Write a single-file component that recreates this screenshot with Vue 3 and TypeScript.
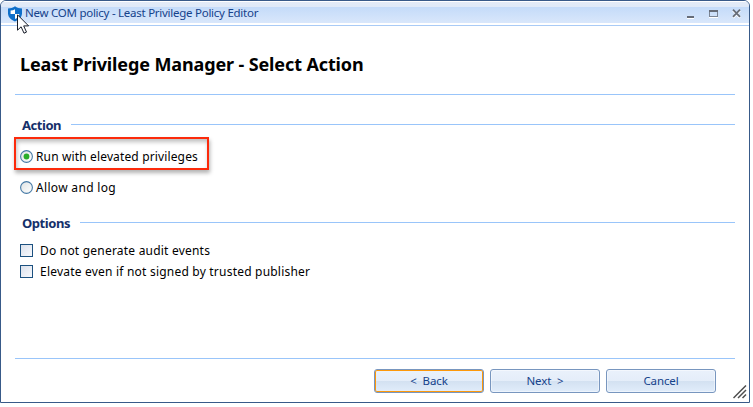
<script setup lang="ts">
import { ref } from 'vue'

interface Choice {
  id: string
  label: string
}

const actions: Choice[] = [
  { id: 'elevate', label: 'Run with elevated privileges' },
  { id: 'allow', label: 'Allow and log' },
]
const options: Choice[] = [
  { id: 'audit', label: 'Do not generate audit events' },
  { id: 'unsigned', label: 'Elevate even if not signed by trusted publisher' },
]
const buttons: Choice[] = [
  { id: 'back', label: '<\u00a0 Back' },
  { id: 'next', label: 'Next \u00a0>' },
  { id: 'cancel', label: 'Cancel' },
]

const selected = ref('elevate')
const focused = ref('back')
</script>

<template>
  <div class="window">
    <header class="titlebar">
      <svg class="shield" width="16" height="16" viewBox="0 0 16 16">
        <path d="M8 0.3C6 1.9 3.6 2.4 1 2.5V7.5C1.2 11.3 4 14 8 15.4C12 14 14.8 11.3 15 7.5V2.5C12.4 2.4 10 1.9 8 0.3Z" fill="#0f6fc9" />
        <path d="M8 3.2V7.9H3.6V4.6C5.3 4.5 6.8 4 8 3.2Z" fill="#fff" />
        <path d="M8 7.9H12.4C12.2 10.2 10.5 12 8 13Z" fill="#fff" />
      </svg>
      <span class="caption">New COM policy - Least Privilege Policy Editor</span>
      <svg class="controls" width="60" height="14" viewBox="0 0 60 14" shape-rendering="crispEdges">
        <rect x="3" y="12" width="7" height="1" fill="#fff" />
        <rect x="3" y="10" width="7" height="2" fill="#666c78" />
        <rect x="25" y="11" width="9" height="1" fill="#fff" />
        <rect x="25.5" y="4.5" width="8" height="6" fill="none" stroke="#7b8595" />
        <rect x="25" y="4" width="9" height="2" fill="#666c78" />
        <g shape-rendering="auto" fill="none">
          <path d="M49 4.6L56 11.8M56 4.6L49 11.8" stroke="#fff" stroke-width="2.2" />
          <path d="M49 3.7L56 10.9M56 3.7L49 10.9" stroke="#666c78" stroke-width="1.8" />
        </g>
      </svg>
    </header>

    <main class="body">
      <h1 class="heading">Least Privilege Manager - Select Action</h1>
      <div class="rule"></div>

      <section class="group">
        <h2 class="legend"><span>Action</span></h2>
        <label
          v-for="item in actions"
          :key="item.id"
          class="radio-row"
          :class="{ marked: item.id === 'elevate' }"
          @click="selected = item.id"
        >
          <svg width="13" height="13" viewBox="0 0 13 13">
            <defs>
              <linearGradient id="radioFill" x1="0" y1="0" x2="1" y2="1">
                <stop offset="0" stop-color="#dfe3e3" />
                <stop offset="1" stop-color="#fff" />
              </linearGradient>
            </defs>
            <circle cx="6.5" cy="6.5" r="5.9" fill="url(#radioFill)" stroke="#467aa6" stroke-width="1.1" />
            <circle v-if="selected === item.id" cx="6.5" cy="6.5" r="2.9" fill="#29ad29" />
          </svg>
          <span :class="`label-${item.id}`">{{ item.label }}</span>
        </label>
      </section>

      <section class="group options">
        <h2 class="legend"><span>Options</span></h2>
        <label v-for="item in options" :key="item.id" class="check-row">
          <i class="box"></i>
          <span :class="`label-${item.id}`">{{ item.label }}</span>
        </label>
      </section>
    </main>

    <footer class="footer">
      <button
        v-for="item in buttons"
        :key="item.id"
        class="button"
        :class="{ focused: focused === item.id }"
        @click="focused = item.id"
      >
        {{ item.label }}
      </button>
    </footer>

    <svg class="grip" width="14" height="14" viewBox="0 0 14 14" fill="none" stroke="#4e4e4e" stroke-width="1.5">
      <path d="M0.5 13L13 0.5M5 13L13 5M9.5 13L13 9.5" />
    </svg>
    <svg class="pointer" width="13" height="21" viewBox="0 0 13 21">
      <path d="M0.5 0.8V16.2L4.1 12.8L7 19.2L9.5 18.1L6.7 11.9H11.6Z" fill="#fff" stroke="#171c28" stroke-width="1" />
    </svg>
  </div>
</template>

<style>
body {
  background: #fff;
}
</style>

<style scoped>
.window {
  position: relative;
  box-sizing: border-box;
  width: 750px;
  height: 403px;
  border: 1px solid #385a89;
  border-radius: 6px 6px 0 0;
  background: #fff;
  overflow: hidden;
  display: flex;
  flex-direction: column;
  font-family: "Noto Sans", sans-serif;
  font-size: 12px;
  color: #000;
}
.titlebar {
  box-sizing: border-box;
  height: 25px;
  flex: none;
  display: flex;
  align-items: flex-start;
  padding: 5px 5px 0 6px;
  border-bottom: 1px solid #a9cbf6;
  background: linear-gradient(#fff 0 1px, #e3ebf7 1px, #dfe9f8 6px, #c4dbf9 6px, #d9e7fb 22px, #fff 22px);
}
.shield {
  flex: none;
}
.caption {
  margin: -3px 0 0 2px;
  font-size: 11.5px;
  line-height: 19px;
  color: #15428b;
  letter-spacing: -0.26px;
  white-space: nowrap;
}
.controls {
  margin-left: auto;
}
.body {
  flex: 1;
  padding: 0 14px;
}
.heading {
  margin: 25px 0 0 5px;
  font-size: 18px;
  line-height: 26px;
  font-weight: 700;
  letter-spacing: -0.12px;
  white-space: nowrap;
}
.rule {
  height: 1px;
  margin-top: 17px;
  background: #99c5fa;
}
.legend {
  display: flex;
  align-items: center;
  gap: 10px;
  margin: 19px 0 0 7px;
  font-size: 13px;
  line-height: 19px;
  font-weight: 700;
  letter-spacing: -0.45px;
  color: #15306a;
}
.legend span {
  padding-top: 2px;
  white-space: nowrap;
}
.legend::after {
  content: "";
  flex: 1;
  height: 1px;
  background: #99c5fa;
}
.radio-row {
  box-sizing: border-box;
  display: flex;
  align-items: center;
  gap: 3px;
  height: 29px;
  margin-top: 3px;
  padding-left: 5px;
  line-height: 20px;
  white-space: nowrap;
}
.radio-row.marked {
  width: 195px;
  height: 33px;
  margin: 2px 0 0 -1px;
  padding: 6px 0 0 4px;
  border: 2px solid #fc2a0b;
  box-shadow: 1px 3px 4px rgba(0, 0, 0, 0.3), inset 1px 3px 4px rgba(0, 0, 0, 0.25);
}
.label-elevate {
  letter-spacing: 0.14px;
}
.label-allow {
  letter-spacing: 0.32px;
}
.label-audit {
  letter-spacing: 0.21px;
}
.label-unsigned {
  letter-spacing: 0.21px;
}
.options .legend {
  margin-top: 10px;
}
.check-row {
  display: flex;
  align-items: center;
  gap: 7px;
  height: 21px;
  padding-left: 5px;
  line-height: 20px;
  white-space: nowrap;
}
.options .legend + .check-row {
  margin-top: 7px;
}
.box {
  box-sizing: border-box;
  width: 13px;
  height: 13px;
  border: 1px solid #1c5180;
  background: linear-gradient(135deg, #dce1eb, #f7f9fd);
}
.footer {
  flex: none;
  display: flex;
  justify-content: flex-end;
  gap: 6px;
  height: 44px;
  box-sizing: border-box;
  margin: 0 14px;
  padding: 10px 19px 0 0;
  border-top: 1px solid #99c5fa;
}
.button {
  box-sizing: border-box;
  width: 110px;
  height: 24px;
  padding: 0;
  border: 1px solid #7896bf;
  border-radius: 3px;
  background: linear-gradient(#eaf1fb, #e4edf9 50%, #d3e1f1 50%, #e1edfb);
  box-shadow: inset 0 0 0 1px rgba(255, 255, 255, 0.45);
  font: 11.5px/22px "Noto Sans", sans-serif;
  letter-spacing: -0.1px;
  color: #15428b;
  white-space: nowrap;
}
.button.focused {
  box-shadow: inset 0 0 0 1px #fd980a;
}
.grip {
  position: absolute;
  right: 2px;
  bottom: 3px;
}
.pointer {
  position: absolute;
  left: 16px;
  top: 13px;
}
</style>
